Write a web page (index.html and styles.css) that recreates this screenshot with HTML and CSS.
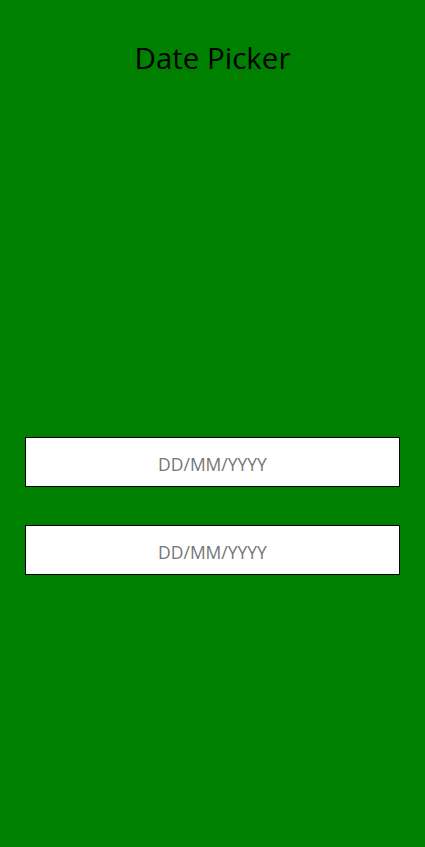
FILE: index.html
```html
<!DOCTYPE html>
<html>
<head>
<meta charset="utf-8">
<link rel="stylesheet" href="styles.css">
</head>
<body>
<div class="page">
  <h1 class="title">Date Picker</h1>
  <div class="fields">
    <input class="date-input" type="text" placeholder="DD/MM/YYYY">
    <input class="date-input" type="text" placeholder="DD/MM/YYYY">
  </div>
</div>
</body>
</html>
```
FILE: styles.css
```css
html, body {
  margin: 0;
  padding: 0;
  background: #008000;
  height: 100%;
}
.page {
  font-family: "Open Sans", "Noto Sans", sans-serif;
  display: flex;
  flex-direction: column;
  align-items: center;
  padding: 0 25px;
}
.title {
  margin: 38px 0 0;
  font-size: 29.5px;
  font-weight: 400;
  line-height: 40px;
  color: #000;
}
.fields {
  margin-top: 359px;
  display: flex;
  flex-direction: column;
  gap: 38px;
  width: 100%;
}
.date-input {
  box-sizing: border-box;
  width: 100%;
  height: 50px;
  border: 1px solid #000;
  background: #fff;
  text-align: center;
  font-family: "Open Sans", "Noto Sans", sans-serif;
  font-size: 17.5px;
  padding: 3px 0 0;
  outline: none;
}
.date-input::placeholder {
  color: #767676;
}
```
